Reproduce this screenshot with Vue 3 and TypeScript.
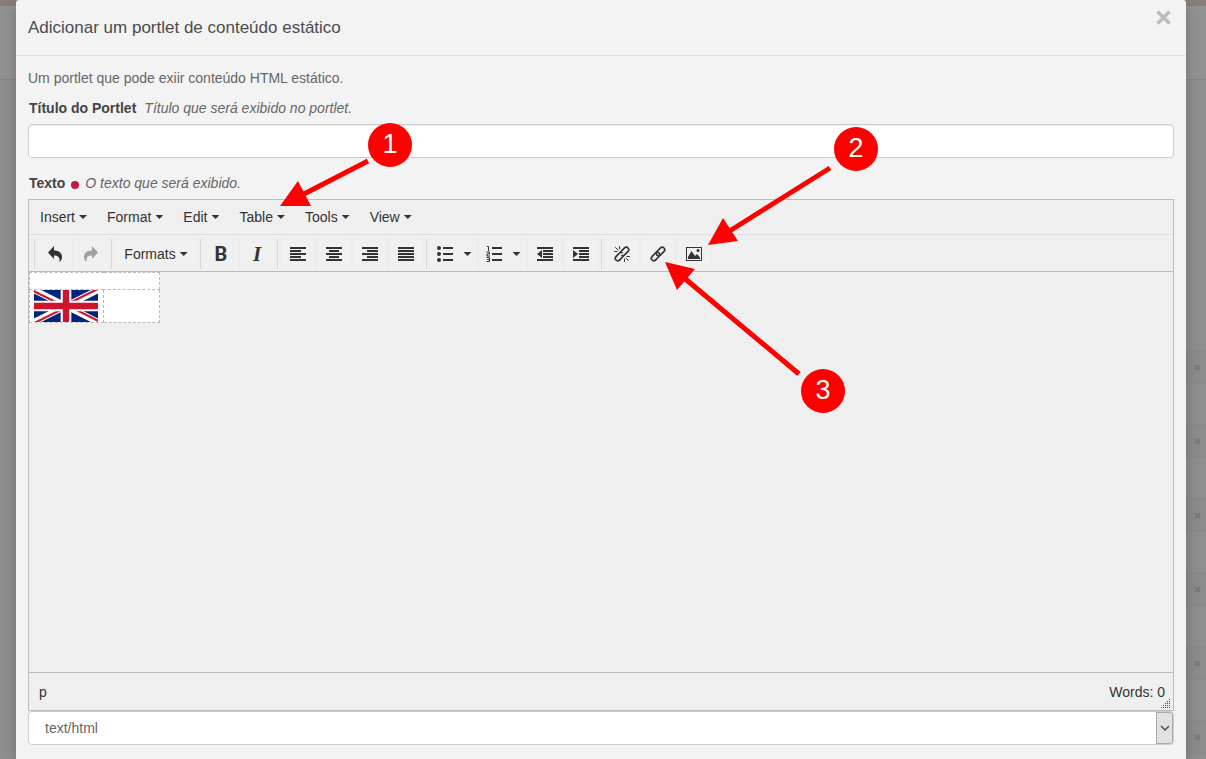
<script setup lang="ts">
import { ref } from 'vue'

interface Tool {
  name: string
  label: string
  menu?: boolean
  disabled?: boolean
}

const menus: string[] = ['Insert', 'Format', 'Edit', 'Table', 'Tools', 'View']

const groups: Tool[][] = [
  [
    { name: 'undo', label: 'Undo' },
    { name: 'redo', label: 'Redo', disabled: true },
  ],
  [{ name: 'formats', label: 'Formats' }],
  [
    { name: 'bold', label: 'Bold' },
    { name: 'italic', label: 'Italic' },
  ],
  [
    { name: 'left', label: 'Align left' },
    { name: 'center', label: 'Align center' },
    { name: 'right', label: 'Align right' },
    { name: 'justify', label: 'Justify' },
  ],
  [
    { name: 'bullets', label: 'Bullet list', menu: true },
    { name: 'numbers', label: 'Numbered list', menu: true },
    { name: 'outdent', label: 'Decrease indent' },
    { name: 'indent', label: 'Increase indent' },
  ],
  [
    { name: 'unlink', label: 'Remove link' },
    { name: 'link', label: 'Insert link' },
    { name: 'image', label: 'Insert image' },
  ],
]

const icons: Record<string, string> = {
  undo: 'M1 6.500L7 0V4.500C12 4.500 15 7 15 11C15 13.500 14 15 12.500 16C13 11.500 11.500 9.500 7 9.500V13Z',
  redo: 'M15 6.500L9 0V4.500C4 4.500 1 7 1 11C1 13.500 2 15 3.500 16C3 11.500 4.500 9.500 9 9.500V13Z',
  left: 'M0 1h16v2H0zM0 4h11v2H0zM0 7h16v2H0zM0 10h11v2H0zM0 13h16v2H0z',
  center: 'M0 1h16v2H0zM3 4h10v2H3zM0 7h16v2H0zM3 10h10v2H3zM0 13h16v2H0z',
  right: 'M0 1h16v2H0zM5 4h11v2H5zM0 7h16v2H0zM5 10h11v2H5zM0 13h16v2H0z',
  justify: 'M0 1h16v2H0zM0 4h16v2H0zM0 7h16v2H0zM0 10h16v2H0zM0 13h16v2H0z',
  bullets:
    'M6 1h10v2H6zM6 7h10v2H6zM6 13h10v2H6zM0 2a2 2 0 1 0 4 0a2 2 0 1 0-4 0zM0 8a2 2 0 1 0 4 0a2 2 0 1 0-4 0zM0 14a2 2 0 1 0 4 0a2 2 0 1 0-4 0z',
  outdent: 'M0 1h16v2H0zM6 4h10v2H6zM6 7h10v2H6zM6 10h10v2H6zM0 13h16v2H0zM5 4v8L0 8z',
  indent: 'M0 1h16v2H0zM6 4h10v2H6zM6 7h10v2H6zM6 10h10v2H6zM0 13h16v2H0zM0 4v8l5-4z',
}

const title = ref('')
const format = ref('text/html')
const rows = [0, 1, 2, 3, 4, 5]
</script>

<template>
  <div class="page">
    <div class="backdrop" aria-hidden="true">
      <div class="stripe"></div>
      <div class="masthead"></div>
      <div class="band"></div>
      <div v-for="r in rows" :key="r" class="row">
        <svg width="7" height="7" viewBox="0 0 7 7"><path d="M1 1L6 6M6 1L1 6" stroke="#7a7a7a" stroke-width="2" /></svg>
      </div>
    </div>

    <main class="dialog" role="dialog" aria-labelledby="dialog-title">
      <header class="head">
        <h1 id="dialog-title">Adicionar um portlet de conteúdo estático</h1>
        <button class="close" type="button" aria-label="Fechar">
          <svg width="15" height="15" viewBox="0 0 15 15"><path d="M1.500 1.500L13.500 13.500M13.500 1.500L1.500 13.500" stroke="#bcbcbc" stroke-width="3.400" /></svg>
        </button>
      </header>

      <form class="body" @submit.prevent>
        <p class="intro">Um portlet que pode exiir conteúdo HTML estático.</p>
        <label class="label" for="portlet-title"><b>Título do Portlet</b><em>Título que será exibido no portlet.</em></label>
        <input id="portlet-title" v-model="title" class="field" type="text" />

        <div id="text-label" class="label second"><b>Texto</b><span class="required"></span><em>O texto que será exibido.</em></div>

        <section class="editor" aria-labelledby="text-label">
          <div class="menubar">
            <button v-for="m in menus" :key="m" type="button" class="menu">{{ m }}<i class="caret"></i></button>
          </div>

          <div class="toolbar">
            <div v-for="(group, g) in groups" :key="g" class="group">
              <button
                v-for="t in group"
                :key="t.name"
                type="button"
                class="tool"
                :class="{ split: t.menu, text: t.name === 'formats' }"
                :aria-label="t.label"
                :disabled="t.disabled"
              >
                <template v-if="t.name === 'formats'">Formats<i class="caret"></i></template>
                <span v-else-if="t.name === 'bold'" class="bold">B</span>
                <span v-else-if="t.name === 'italic'" class="italic">I</span>
                <svg v-else width="16" height="16" viewBox="0 0 16 16" fill="currentColor">
                  <path v-if="icons[t.name]" :d="icons[t.name]" />
                  <g v-else-if="t.name === 'numbers'">
                    <path d="M6 1h10v2H6zM6 7h10v2H6zM6 13h10v2H6z" />
                    <path d="M1 .5h1.500V5M.5 6h3v2h-2.500v2H4M.5 11.500h3v4h-3M1 13.500h2.500" fill="none" stroke="currentColor" />
                  </g>
                  <g v-else-if="t.name === 'image'">
                    <path fill-rule="evenodd" d="M0 1h16v14H0zM1 2v12h14V2z" />
                    <path d="M2 13V11L5.500 5L9 10L11 8L14 11.500V13z" />
                    <circle cx="12" cy="4.500" r="1.500" />
                  </g>
                  <g v-else fill="none" stroke="currentColor" stroke-width="1.700" stroke-linecap="round">
                    <template v-if="t.name === 'link'">
                      <path d="M7.500 9.500C6 8.500 6 6.500 7 5.500L10.300 2.200C11.500 1 12.800 .800 14 2C15.200 3.200 15 4.500 13.800 5.700L10.500 9C10 9.500 9.500 9.700 9 9.800" />
                      <path d="M8.500 6.500C10 7.500 10 9.500 9 10.500L5.700 13.800C4.500 15 3.200 15.200 2 14C.800 12.800 1 11.500 2.200 10.300L5.500 7C6 6.500 6.500 6.300 7 6.200" />
                    </template>
                    <template v-else>
                      <path d="M7 5.500L10.300 2.200C11.500 1 12.800 .800 14 2C15.200 3.200 15 4.500 13.800 5.700L10.500 9C9.800 9.700 9 9.800 8 9.500" />
                      <path d="M9 10.500L5.700 13.800C4.500 15 3.200 15.200 2 14C.800 12.800 1 11.500 2.200 10.300L5.500 7C6.200 6.300 7 6.200 8 6.500" />
                      <path d="M1.500 1.500L4 4M5.500 .5V3M.5 5.500H3M12 12L14.500 14.500M10.500 13V15.500M13 10.500H15.500" stroke-width="1" />
                    </template>
                  </g>
                </svg>
                <i v-if="t.menu" class="caret"></i>
              </button>
            </div>
          </div>

          <div class="canvas" contenteditable="true" role="textbox" aria-multiline="true" aria-labelledby="text-label">
            <table>
              <tbody>
                <tr class="blank"><td colspan="2"></td></tr>
                <tr>
                  <td class="flag">
                    <svg width="64" height="32" viewBox="0 0 60 30" role="img" aria-label="English">
                      <clipPath id="flag-half"><path d="M30 15h30v15zv15H0zH0V0zV0h30z" /></clipPath>
                      <path d="M0 0h60v30H0z" fill="#00247d" />
                      <path d="M0 0L60 30M60 0L0 30" stroke="#fff" stroke-width="6" />
                      <path d="M0 0L60 30M60 0L0 30" clip-path="url(#flag-half)" stroke="#cf142b" stroke-width="4" />
                      <path d="M30 0v30M0 15h60" stroke="#fff" stroke-width="10" />
                      <path d="M30 0v30M0 15h60" stroke="#cf142b" stroke-width="6" />
                    </svg>
                  </td>
                  <td></td>
                </tr>
              </tbody>
            </table>
          </div>

          <footer class="status">
            <span>p</span><span>Words: 0</span>
            <svg class="grip" width="10" height="10" viewBox="0 0 10 10" fill="#444">
              <path d="M8 0h1v1H8zM6 2h1v1H6zM8 2h1v1H8zM4 4h1v1H4zM6 4h1v1H6zM8 4h1v1H8zM2 6h1v1H2zM4 6h1v1H4zM6 6h1v1H6zM8 6h1v1H8zM0 8h1v1H0zM2 8h1v1H2zM4 8h1v1H4zM6 8h1v1H6zM8 8h1v1H8z" />
            </svg>
          </footer>
        </section>

        <div class="picker">
          <select v-model="format" aria-label="Formato do texto"><option>text/html</option></select>
          <span class="arrow"><svg width="10" height="6" viewBox="0 0 10 6"><path d="M1 1L5 5L9 1" fill="none" stroke="#444" stroke-width="1.300" /></svg></span>
        </div>
      </form>
    </main>

    <svg class="notes" width="900" height="420" viewBox="0 0 900 420" aria-hidden="true">
      <g stroke="#f00" stroke-width="5">
        <path d="M368 161L302 195M830 168L728 232M799 374L683 277" />
      </g>
      <path fill="#f00" d="M280 206L298 181L311 206ZM708 245L723 218L738 241ZM665 262L695 269L677 290Z" />
      <g fill="#f00"><circle cx="390" cy="145" r="22" /><circle cx="856" cy="149" r="22" /><circle cx="823" cy="391" r="22" /></g>
      <g class="digits"><text x="390" y="153">1</text><text x="856" y="157">2</text><text x="823" y="399">3</text></g>
    </svg>
  </div>
</template>

<style>
body {
  margin: 0;
  background: #8e8e8e;
}
</style>

<style scoped>
* {
  box-sizing: border-box;
}
.page {
  position: relative;
  height: 100vh;
  overflow: hidden;
  padding: 0 20px 0 16px;
  font: 14px/20px "Liberation Sans", Arial, sans-serif;
  color: #666;
}
button,
input,
select {
  font: inherit;
  color: inherit;
}
button {
  border: 0;
  padding: 0;
  background: none;
}
.backdrop {
  position: absolute;
  inset: 0;
  background: #8f8f8f;
}
.stripe {
  height: 6px;
  background: #8b7c7c;
}
.masthead {
  height: 74px;
  background: #929292;
  border-bottom: 1px solid #858585;
}
.band {
  height: 190px;
  margin-bottom: 80px;
}
.row {
  display: flex;
  align-items: center;
  justify-content: flex-end;
  height: 34px;
  margin: 0 0 40px 50%;
  padding-right: 5px;
  border: 1px solid #888;
  border-width: 1px 0;
  background: #8c8c8c;
}
.dialog {
  position: relative;
  min-height: 100vh;
  background: #f3f3f3;
  border-radius: 3px 3px 0 0;
  box-shadow: 0 5px 15px rgba(0, 0, 0, 0.22);
}
.head {
  display: flex;
  justify-content: space-between;
  height: 56px;
  padding: 0 15px 0 12px;
  border-bottom: 1px solid #e1e1e1;
}
h1 {
  margin: 0;
  font-size: 17px;
  font-weight: 400;
  line-height: 55px;
  color: #4c4c4c;
}
.close {
  height: 15px;
  margin-top: 10px;
}
svg {
  display: block;
}
.body {
  padding: 12px;
}
.intro {
  margin: 0 0 10px;
}
.label {
  display: flex;
  align-items: center;
  margin-bottom: 6px;
  padding-left: 1px;
}
.label b {
  margin-right: 6px;
  color: #444;
}
.label em {
  margin-left: 2px;
}
.second {
  margin-top: 15px;
}
.required {
  width: 8px;
  height: 8px;
  margin: 3px 4px 0 0;
  border-radius: 50%;
  background: #c4183c;
}
.field {
  display: block;
  width: 100%;
  height: 34px;
  padding: 6px 12px;
  border: 1px solid #ccc;
  border-radius: 4px;
  background: #fff;
  box-shadow: inset 0 1px 1px rgba(0, 0, 0, 0.075);
}
.editor {
  border: 1px solid #bcbcbc;
  background: #efefef;
  color: #333;
}
.menubar {
  display: flex;
  height: 35px;
  padding-left: 1px;
  border-bottom: 1px solid #e0e0e0;
}
.menu {
  display: flex;
  align-items: center;
  gap: 4px;
  padding: 0 10px;
}
.caret {
  width: 8px;
  height: 4px;
  background: #333;
  clip-path: polygon(0 0, 100% 0, 50% 100%);
}
.toolbar {
  display: flex;
  height: 37px;
  padding: 4px 0 2px 5px;
  border-bottom: 1px solid #bcbcbc;
}
.group {
  display: flex;
  padding: 0 2px;
  border-left: 1px solid #d6d6d6;
}
.tool {
  display: flex;
  align-items: center;
  justify-content: center;
  width: 36px;
  border: 1px solid #ebebeb;
  border-width: 0 1px;
  background: #f0f0f0;
}
.tool:disabled {
  color: #a0a0a0;
}
.text {
  gap: 4px;
  width: 84px;
}
.split {
  gap: 11px;
  width: 49px;
  padding-left: 1px;
}
.bold {
  font: 700 20px/20px Roboto, sans-serif;
}
.italic {
  font: italic 700 21px/20px "Liberation Serif", serif;
}
.canvas {
  height: 400px;
  outline: 0;
}
table {
  width: 131px;
  border-collapse: collapse;
  background: #fff;
}
td {
  padding: 0;
  border: 1px dashed #bbb;
}
.blank {
  height: 17px;
}
.flag {
  width: 74px;
  padding: 0 5px 0 4px;
}
.status {
  position: relative;
  display: flex;
  justify-content: space-between;
  align-items: center;
  height: 38px;
  padding: 0 8px 0 10px;
  border-top: 1px solid #bcbcbc;
}
.grip {
  position: absolute;
  right: 2px;
  bottom: 1px;
}
.picker {
  position: relative;
}
select {
  display: block;
  appearance: none;
  width: 100%;
  height: 34px;
  padding: 0 32px 0 16px;
  border: 1px solid #ccc;
  border-radius: 4px;
  background: #fff;
}
.arrow {
  position: absolute;
  inset: 1px 1px 1px auto;
  display: grid;
  place-items: center;
  width: 17px;
  border: 1px solid #aaa;
  border-radius: 0 3px 3px 0;
  background: #e1e1e1;
  pointer-events: none;
}
.notes {
  position: absolute;
  top: 0;
  left: 0;
  pointer-events: none;
}
.digits {
  fill: #fff;
  font-size: 27px;
  text-anchor: middle;
}
</style>
